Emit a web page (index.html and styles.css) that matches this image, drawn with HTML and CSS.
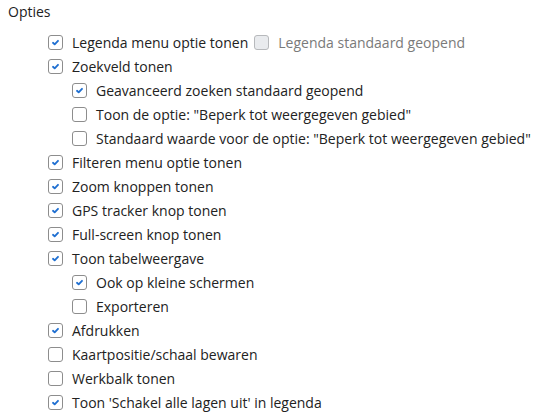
FILE: index.html
```html
<!DOCTYPE html>
<html>
<head>
<meta charset="utf-8">
<link rel="stylesheet" href="styles.css">
</head>
<body>
<div class="panel">
  <div class="title">Opties</div>
  <div class="list">
    <div class="row">
      <label class="opt"><span class="cb on"><svg viewBox="0 0 14 14"><path d="M4.3 7.3 L6.1 9 L9.7 5.2"/></svg></span>Legenda menu optie tonen</label>
      <label class="opt disabled"><span class="cb"></span>Legenda standaard geopend</label>
    </div>
    <div class="row"><label class="opt"><span class="cb on"><svg viewBox="0 0 14 14"><path d="M4.3 7.3 L6.1 9 L9.7 5.2"/></svg></span>Zoekveld tonen</label></div>
    <div class="sub">
      <div class="row"><label class="opt"><span class="cb on"><svg viewBox="0 0 14 14"><path d="M4.3 7.3 L6.1 9 L9.7 5.2"/></svg></span>Geavanceerd zoeken standaard geopend</label></div>
      <div class="row"><label class="opt"><span class="cb"></span>Toon de optie: "Beperk tot weergegeven gebied"</label></div>
      <div class="row"><label class="opt"><span class="cb"></span>Standaard waarde voor de optie: "Beperk tot weergegeven gebied"</label></div>
    </div>
    <div class="row"><label class="opt"><span class="cb on"><svg viewBox="0 0 14 14"><path d="M4.3 7.3 L6.1 9 L9.7 5.2"/></svg></span>Filteren menu optie tonen</label></div>
    <div class="row"><label class="opt"><span class="cb on"><svg viewBox="0 0 14 14"><path d="M4.3 7.3 L6.1 9 L9.7 5.2"/></svg></span>Zoom knoppen tonen</label></div>
    <div class="row"><label class="opt"><span class="cb on"><svg viewBox="0 0 14 14"><path d="M4.3 7.3 L6.1 9 L9.7 5.2"/></svg></span>GPS tracker knop tonen</label></div>
    <div class="row"><label class="opt"><span class="cb on"><svg viewBox="0 0 14 14"><path d="M4.3 7.3 L6.1 9 L9.7 5.2"/></svg></span>Full-screen knop tonen</label></div>
    <div class="row"><label class="opt"><span class="cb on"><svg viewBox="0 0 14 14"><path d="M4.3 7.3 L6.1 9 L9.7 5.2"/></svg></span>Toon tabelweergave</label></div>
    <div class="sub">
      <div class="row"><label class="opt"><span class="cb on"><svg viewBox="0 0 14 14"><path d="M4.3 7.3 L6.1 9 L9.7 5.2"/></svg></span>Ook op kleine schermen</label></div>
      <div class="row"><label class="opt"><span class="cb"></span>Exporteren</label></div>
    </div>
    <div class="row"><label class="opt"><span class="cb on"><svg viewBox="0 0 14 14"><path d="M4.3 7.3 L6.1 9 L9.7 5.2"/></svg></span>Afdrukken</label></div>
    <div class="row"><label class="opt"><span class="cb"></span>Kaartpositie/schaal bewaren</label></div>
    <div class="row"><label class="opt"><span class="cb"></span>Werkbalk tonen</label></div>
    <div class="row"><label class="opt"><span class="cb on"><svg viewBox="0 0 14 14"><path d="M4.3 7.3 L6.1 9 L9.7 5.2"/></svg></span>Toon 'Schakel alle lagen uit' in legenda</label></div>
  </div>
</div>
</body>
</html>
```
FILE: styles.css
```css
html, body {
  margin: 0;
  padding: 0;
  background: #ffffff;
}
body {
  font-family: "Open Sans", "Noto Sans", sans-serif;
  font-size: 14px;
  color: #222222;
}
.panel {
  padding: 2px 0 0 8px;
}
.title {
  line-height: 20px;
  height: 20px;
  margin-bottom: 8px;
}
.list {
  padding-left: 40px;
  display: flex;
  flex-direction: column;
}
.sub {
  padding-left: 24px;
  display: flex;
  flex-direction: column;
}
.row {
  height: 24px;
  display: flex;
  align-items: center;
  gap: 6px;
  white-space: nowrap;
}
.opt {
  display: flex;
  align-items: center;
  gap: 9px;
  white-space: nowrap;
}
.opt.disabled {
  color: #7a7a7a;
}
.cb {
  box-sizing: border-box;
  width: 15px;
  height: 15px;
  border: 1px solid #8d8d8d;
  border-radius: 3px;
  background: #ffffff;
  display: flex;
  align-items: center;
  justify-content: center;
  flex: none;
}
.disabled .cb {
  background: #e9ebee;
  border-color: #b7b9bc;
}
.cb svg {
  width: 13px;
  height: 13px;
}
.cb svg path {
  fill: none;
  stroke: #1f6fd1;
  stroke-width: 2;
  stroke-linecap: round;
  stroke-linejoin: round;
}
```
